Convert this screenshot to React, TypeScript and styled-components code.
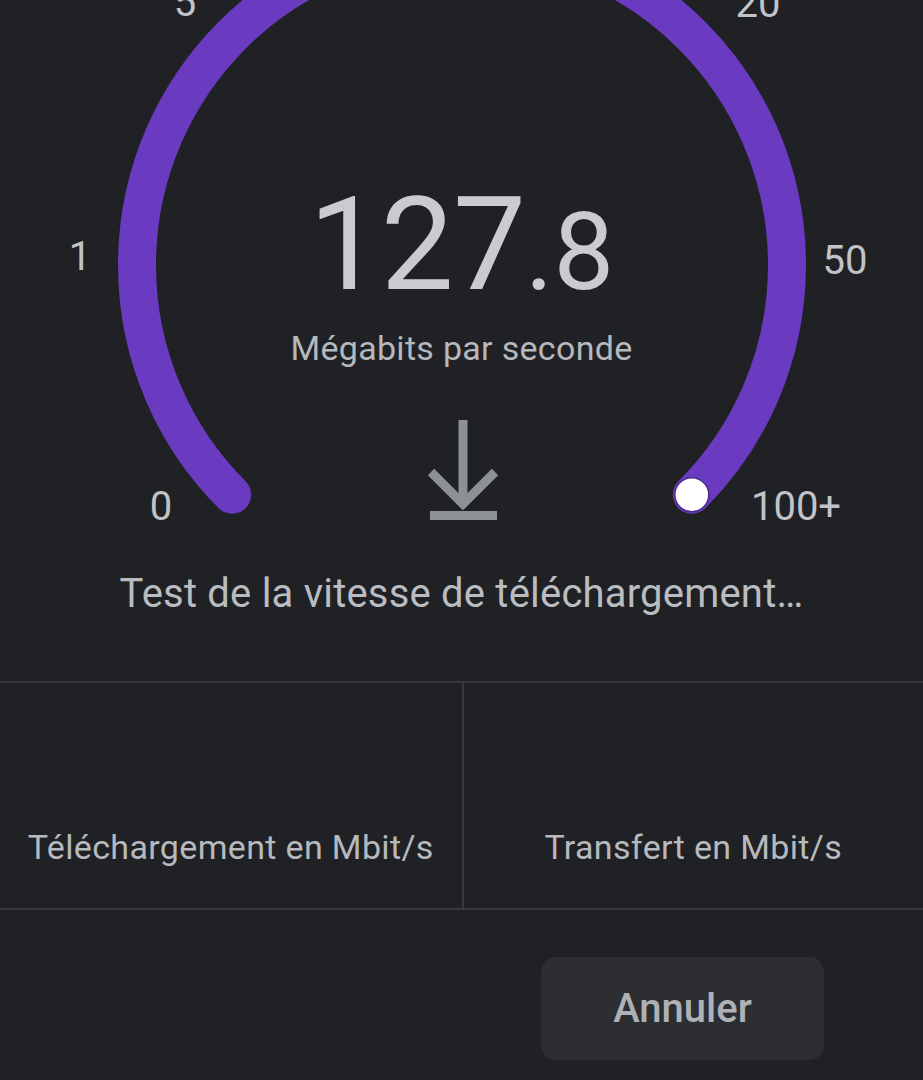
import React from "react";
import styled, { createGlobalStyle } from "styled-components";

const GlobalStyle = createGlobalStyle`
  html, body {
    margin: 0;
    padding: 0;
    background: #202124;
  }
  body {
    font-family: Roboto, "Noto Sans", "Liberation Sans", sans-serif;
    color: #bdc1c6;
    overflow: hidden;
  }
`;

const Screen = styled.main`
  width: 923px;
  height: 1080px;
  background: #202124;
  display: flex;
  flex-direction: column;
  overflow: hidden;
`;

const GaugeArea = styled.section`
  position: relative;
  height: 540px;
  display: flex;
  flex-direction: column;
  align-items: center;
  padding-top: 180px;
  box-sizing: border-box;
`;

const ArcSvg = styled.svg`
  position: absolute;
  left: 0;
  top: 0;
  overflow: visible;
  pointer-events: none;
`;

const ScaleLabel = styled.span<{ $x: number; $y: number }>`
  position: absolute;
  left: ${(p) => p.$x}px;
  top: ${(p) => p.$y}px;
  transform: translate(-50%, -50%);
  font-size: 40px;
  line-height: 1;
  color: #c0c3c7;
  white-space: nowrap;
`;

const Reading = styled.div`
  position: relative;
  font-size: 130px;
  line-height: 1;
  color: #c9cbce;
  white-space: nowrap;
  letter-spacing: -1px;
`;

const Decimal = styled.span`
  font-size: 108px;
  letter-spacing: 0;
`;

const Unit = styled.div`
  position: relative;
  margin-top: 21px;
  font-size: 34px;
  line-height: 1;
  letter-spacing: 0.3px;
  color: #b5b8bc;
`;

const DownloadIcon = styled.svg`
  position: relative;
  margin-top: 44px;
  margin-left: 2px;
`;

const Status = styled.p`
  margin: 34px 0 0;
  text-align: center;
  font-size: 40px;
  line-height: 1;
  letter-spacing: 0.2px;
  color: #b9bcc0;
`;

const Results = styled.section`
  margin-top: 67px;
  display: grid;
  grid-template-columns: 1fr 1fr;
  border-top: 2px solid #38393d;
  border-bottom: 2px solid #38393d;
  height: 229px;
  box-sizing: border-box;
`;

const ResultCell = styled.div<{ $divider?: boolean }>`
  display: flex;
  flex-direction: column;
  justify-content: flex-end;
  align-items: center;
  padding-bottom: 44px;
  border-left: ${(p) => (p.$divider ? "2px solid #38393d" : "none")};
`;

const CellLabel = styled.span`
  font-size: 34px;
  line-height: 1;
  letter-spacing: 0.35px;
  color: #b6b9bd;
  white-space: nowrap;
`;

const Actions = styled.div`
  display: flex;
  justify-content: flex-end;
  padding: 47px 99px 0 0;
`;

const CancelButton = styled.button`
  width: 283px;
  height: 103px;
  border: none;
  border-radius: 15px;
  background: #2d2e32;
  color: #aeb1b5;
  font-family: Roboto, "Noto Sans", sans-serif;
  font-size: 40px;
  font-weight: 500;
  cursor: pointer;
`;

const CX = 462;
const CY = 265;
const R = 325;
const D = R * Math.SQRT1_2;

const labels = [
  { t: "0", x: 161, y: 507 },
  { t: "1", x: 80, y: 257 },
  { t: "5", x: 185, y: 3 },
  { t: "20", x: 758, y: 4 },
  { t: "50", x: 845, y: 261 },
  { t: "100+", x: 796, y: 507 },
];

export default function App() {
  const sx = CX - D;
  const ex = CX + D;
  const ey = CY + D;
  return (
    <>
      <GlobalStyle />
      <Screen>
        <GaugeArea>
          <ArcSvg width={923} height={540} viewBox="0 0 923 540">
            <path
              d={`M ${sx} ${ey} A ${R} ${R} 0 1 1 ${ex} ${ey}`}
              fill="none"
              stroke="#6a3bc0"
              strokeWidth={38}
              strokeLinecap="round"
            />
            <circle cx={ex} cy={ey} r={17} fill="#ffffff" stroke="#4b2a90" strokeWidth={1.5} />
          </ArcSvg>
          {labels.map((l) => (
            <ScaleLabel key={l.t} $x={l.x} $y={l.y}>
              {l.t}
            </ScaleLabel>
          ))}
          <Reading>
            127<Decimal>.8</Decimal>
          </Reading>
          <Unit>Mégabits par seconde</Unit>
          <DownloadIcon width={80} height={116} viewBox="0 0 80 116">
            <g stroke="#8d9094" strokeWidth={9} fill="none">
              <line x1={40} y1={11} x2={40} y2={96} />
              <polyline points="8,63 40,95 72,63" />
              <line x1={7} y1={106.5} x2={74} y2={106.5} />
            </g>
          </DownloadIcon>
        </GaugeArea>
        <Status>Test de la vitesse de téléchargement…</Status>
        <Results>
          <ResultCell>
            <CellLabel>Téléchargement en Mbit/s</CellLabel>
          </ResultCell>
          <ResultCell $divider>
            <CellLabel>Transfert en Mbit/s</CellLabel>
          </ResultCell>
        </Results>
        <Actions>
          <CancelButton>Annuler</CancelButton>
        </Actions>
      </Screen>
    </>
  );
}
